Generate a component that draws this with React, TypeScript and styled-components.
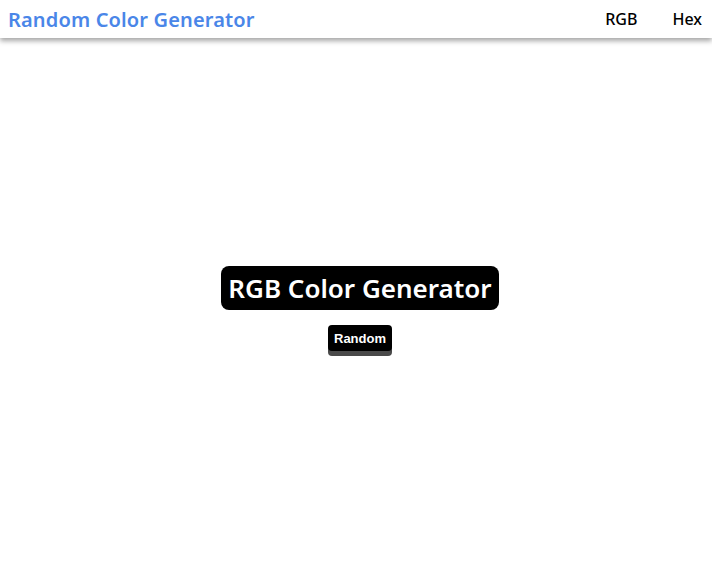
import React from "react";
import styled, { createGlobalStyle } from "styled-components";

const GlobalStyle = createGlobalStyle`
  html, body {
    margin: 0;
    padding: 0;
    height: 100%;
    background: #ffffff;
    font-family: "Noto Sans", "Open Sans", sans-serif;
  }
  #root {
    height: 100%;
  }
`;

const Page = styled.div`
  display: flex;
  flex-direction: column;
  height: 100vh;
`;

const Header = styled.header`
  display: flex;
  align-items: center;
  justify-content: space-between;
  height: 38px;
  padding: 0 10px 0 8px;
  background: #ffffff;
  box-shadow: 0 3px 5px rgba(0, 0, 0, 0.35);
  position: relative;
  z-index: 1;
`;

const Brand = styled.div`
  color: #4a86e8;
  font-size: 20px;
  font-weight: 600;
  letter-spacing: 0.15px;
`;

const Nav = styled.nav`
  display: flex;
  gap: 35px;
`;

const NavLink = styled.a`
  color: #000000;
  font-size: 16px;
  font-weight: 500;
  text-decoration: none;
  cursor: pointer;
`;

const Main = styled.main`
  flex: 1;
  display: flex;
  flex-direction: column;
  align-items: center;
  justify-content: center;
  gap: 15px;
  padding: 0 0 4px 8px;
`;

const Heading = styled.h1`
  margin: 0;
  padding: 0 7px;
  height: 44px;
  line-height: 44px;
  background: #000000;
  color: #ffffff;
  border-radius: 8px;
  font-size: 26px;
  font-weight: 600;
`;

const RandomButton = styled.button`
  background: #000000;
  color: #ffffff;
  border: none;
  border-radius: 4px;
  height: 26px;
  padding: 2px 6px 0;
  font-family: "Liberation Sans", Arial, sans-serif;
  font-size: 13px;
  font-weight: bold;
  box-shadow: 0 5px 0 #4a4a4a;
  cursor: pointer;
  margin-bottom: 5px;
`;

export default function App() {
  return (
    <Page>
      <GlobalStyle />
      <Header>
        <Brand>Random Color Generator</Brand>
        <Nav>
          <NavLink>RGB</NavLink>
          <NavLink>Hex</NavLink>
        </Nav>
      </Header>
      <Main>
        <Heading>RGB Color Generator</Heading>
        <RandomButton>Random</RandomButton>
      </Main>
    </Page>
  );
}
